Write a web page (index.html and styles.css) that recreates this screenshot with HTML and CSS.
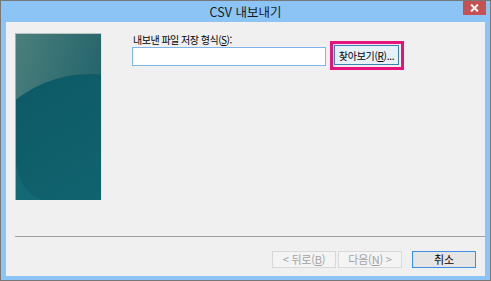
FILE: index.html
```
<!DOCTYPE html>
<html lang="ko">
<head>
    <meta charset="UTF-8">
    <meta name="viewport" content="width=device-width, initial-scale=1.0">
    <title>CSV 내보내기</title>
    <link rel="stylesheet" href="styles.css">
</head>
<body>
    <div class="window">
        <div class="titlebar">
            <span></span>
            <span class="title">CSV 내보내기</span>
            <button class="close">
                <svg width="9" height="8" viewBox="0 0 9 8">
                    <path d="M1 0.5 L8 7.5 M8 0.5 L1 7.5" stroke="#fff" stroke-width="2"/>
                </svg>
            </button>
        </div>

        <div class="content">
            <div class="main">
                <div class="picture">
                    <svg width="87" height="167" viewBox="0 0 87 167">
                        <defs>
                            <linearGradient id="top" x1="0" y1="0" x2="1" y2="0.5">
                                <stop offset="0" stop-color="#4c7f7c"/>
                                <stop offset="1" stop-color="#1f6269"/>
                            </linearGradient>
                            <linearGradient id="low" x1="0" y1="0" x2="0.6" y2="1">
                                <stop offset="0" stop-color="#0c5863"/>
                                <stop offset="1" stop-color="#136a76"/>
                            </linearGradient>
                        </defs>
                        <rect width="87" height="167" fill="url(#top)"/>
                        <circle cx="75" cy="160" r="119" fill="url(#low)"/>
                        <path d="M0 120 Q 2 160 28 167 L0 167 Z" fill="#15707a" opacity="0.6"/>
                        <rect x="0" y="0" width="87" height="1" fill="#b8c4c4"/>
                        <rect x="0" y="0" width="1" height="167" fill="#9fb2b2"/>
                        <rect x="86" y="0" width="1" height="167" fill="#dfe6e6"/>
                    </svg>
                </div>
                <div class="form">
                    <div class="label">내보낸 파일 저장 형식(<u>S</u>):</div>
                    <div class="row">
                        <input type="text" class="path">
                        <div class="highlight">
                            <button class="browse">찾아보기(<u>R</u>)...</button>
                        </div>
                    </div>
                </div>
            </div>
            <div class="separator"></div>
            <div class="footer">
                <button class="btn disabled">&lt; 뒤로(<u>B</u>)</button>
                <button class="btn disabled">다음(<u>N</u>) &gt;</button>
                <button class="btn cancel">취소</button>
            </div>
        </div>
    </div>
</body>
</html>
```

FILE: styles.css
```
body{
    margin: 0;
    font-family: "Noto Sans CJK KR", "Noto Sans", sans-serif;
    font-size: 11px;
    color: #000;
}
.window{
    width: 491px;
    height: 281px;
    box-sizing: border-box;
    border: 1px solid #777;
    background: #8cc5f5;
    display: flex;
    flex-direction: column;
}
.titlebar{
    height: 21px;
    display: grid;
    grid-template-columns: 1fr auto 1fr;
}
.title{
    font-size: 12.5px;
    line-height: 22px;
    color: #1a1a1a;
}
.close{
    justify-self: end;
    align-self: start;
    width: 23px;
    height: 14px;
    margin-right: 4px;
    padding: 0;
    border: none;
    background: #c75050;
    display: flex;
    align-items: center;
    justify-content: center;
}
.content{
    flex: 1;
    margin: 0 5px 4px 5px;
    background: #f0f0f0;
    padding: 11px 0 8px 9px;
    display: flex;
    flex-direction: column;
}
.main{
    flex: 1;
    display: flex;
}
.picture{
    width: 87px;
    height: 167px;
}
.picture svg{
    display: block;
}
.form{
    margin-left: 30px;
}
.label{
    font-size: 10px;
    line-height: 14px;
    margin-left: 1px;
    letter-spacing: -0.5px;
}
.row{
    display: flex;
    align-items: flex-start;
    margin-top: -6px;
}
.path{
    width: 194px;
    height: 19px;
    box-sizing: border-box;
    margin: 6px 0 0 0;
    border: 1px solid #7eb4ea;
    background: #fff;
    padding: 0 3px;
}
.highlight{
    margin-left: 4px;
    border: 3px solid #e6137f;
    padding: 1px 2px 0 1px;
    height: 22px;
}
.browse{
    width: 65px;
    height: 20px;
    padding: 0;
    border: 1px solid #3c7fb1;
    background: #e5f1fb;
    font-family: inherit;
    font-size: 10px;
    letter-spacing: -0.3px;
    color: #000;
}
.separator{
    border-top: 1px solid #a0a0a0;
}
.footer{
    margin-top: 14px;
    padding-right: 9px;
    display: flex;
    justify-content: flex-end;
    gap: 2px;
}
.btn{
    width: 64px;
    height: 17px;
    padding: 0;
    font-family: inherit;
    font-size: 11px;
    line-height: 15px;
    letter-spacing: -0.2px;
}
.disabled{
    border: 1px solid #d9d9d9;
    background: #f4f4f4;
    color: #a3a3a3;
}
.cancel{
    margin-left: 8px;
    border: 1px solid #3d8ee6;
    background: #e5e5e5;
    color: #000;
}
```
